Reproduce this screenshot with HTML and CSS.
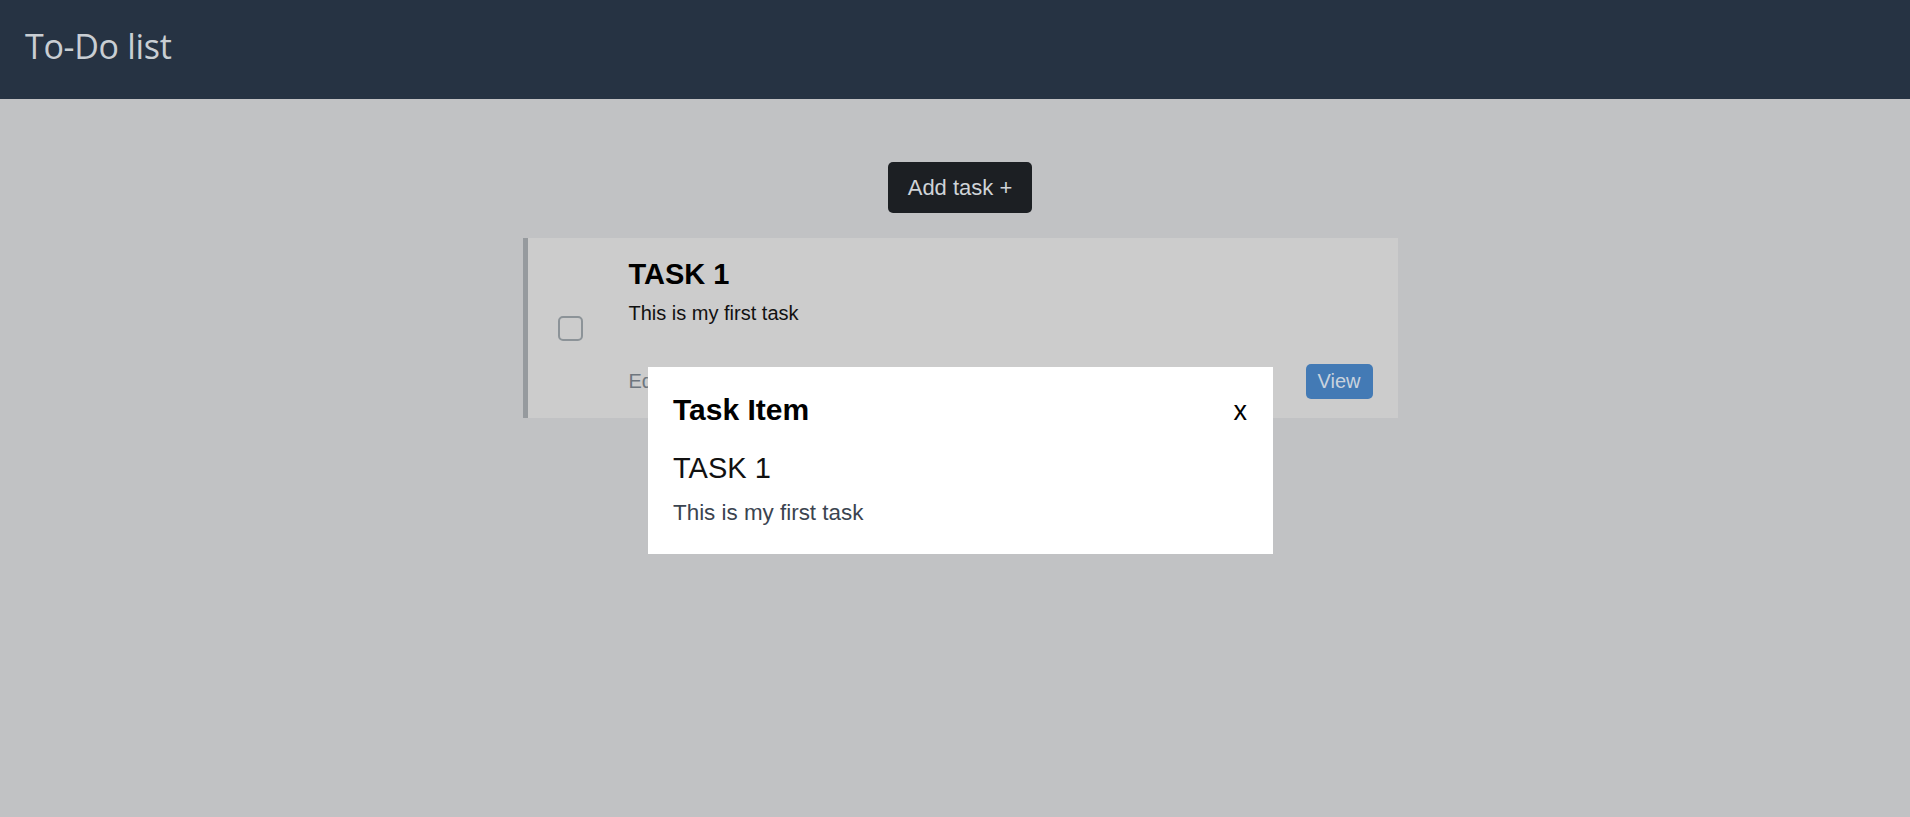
FILE: index.html
```html
<!DOCTYPE html>
<html lang="en">
<head>
<meta charset="utf-8">
<title>To-Do list</title>
<link rel="stylesheet" href="styles.css">
</head>
<body>
<header class="topbar">
  <h1 class="brand">To-Do list</h1>
</header>
<main class="main">
  <button class="add-btn" type="button">Add task +</button>
  <section class="card">
    <div class="check-col">
      <span class="checkbox"></span>
    </div>
    <div class="card-body">
      <h2 class="card-title">TASK 1</h2>
      <p class="card-desc">This is my first task</p>
      <div class="card-actions">
        <button class="btn-link" type="button">Edit</button>
        <button class="btn-view" type="button">View</button>
      </div>
    </div>
  </section>
</main>
<div class="modal">
  <div class="modal-head">
    <h3 class="modal-title">Task Item</h3>
    <span class="modal-close">x</span>
  </div>
  <div class="modal-task">TASK 1</div>
  <div class="modal-desc">This is my first task</div>
</div>
</body>
</html>
```

FILE: styles.css
```css
* { box-sizing: border-box; }
html, body { margin: 0; padding: 0; }
body {
  background: #c1c2c4;
  font-family: "Liberation Sans", Arial, sans-serif;
  min-height: 817px;
}
.topbar {
  height: 99px;
  background: #263343;
  padding: 29px 25px 0;
}
.brand {
  margin: 0;
  font-family: "Open Sans", "Noto Sans", sans-serif;
  font-weight: 400;
  font-size: 34px;
  line-height: 1;
  color: #c9ced3;
  letter-spacing: -0.3px;
}
.main {
  display: flex;
  flex-direction: column;
  align-items: center;
  padding: 63px 0 0 10px;
  gap: 25px;
}
.add-btn {
  width: 144px;
  height: 51px;
  border: 0;
  border-radius: 5px;
  background: #1c1f23;
  color: #cfd3d7;
  font-family: "Liberation Sans", Arial, sans-serif;
  font-size: 22px;
  padding: 0;
}
.card {
  width: 875px;
  height: 180px;
  background: #cccccc;
  border-left: 5px solid #969a9e;
  display: flex;
  align-items: center;
}
.check-col {
  width: 86px;
  display: flex;
  justify-content: center;
  align-items: center;
}
.checkbox {
  width: 25px;
  height: 25px;
  border: 2px solid #8c9398;
  border-radius: 5px;
}
.card-body {
  flex: 1;
  align-self: stretch;
  padding: 19px 25px 19px 15px;
  display: flex;
  flex-direction: column;
}
.card-title {
  margin: 0;
  font-size: 29px;
  font-weight: 700;
  line-height: 1.2;
  color: #000;
}
.card-desc {
  margin: 6px 0 0;
  font-size: 20px;
  line-height: 1.5;
  color: #111;
}
.card-actions {
  margin-top: auto;
  display: flex;
  justify-content: space-between;
  align-items: center;
}
.btn-link,
.btn-view {
  font-family: "Liberation Sans", Arial, sans-serif;
  font-size: 20px;
  line-height: 29px;
  height: 35px;
  border: 0;
  border-radius: 5px;
  padding: 3px 12px;
}
.btn-link {
  background: transparent;
  color: #6e767e;
  padding-left: 0;
}
.btn-view {
  background: #437ab5;
  color: #c9d3de;
}
.modal {
  position: absolute;
  left: 648px;
  top: 367px;
  width: 625px;
  height: 187px;
  background: #fff;
  padding: 26px 26px 24px 25px;
}
.modal-head {
  display: flex;
  justify-content: space-between;
  align-items: center;
}
.modal-title {
  margin: 0;
  font-size: 30px;
  font-weight: 700;
  line-height: 1.15;
  color: #000;
}
.modal-close {
  font-size: 27px;
  line-height: 1;
  color: #000;
  padding-top: 3px;
}
.modal-task {
  margin-top: 23px;
  font-size: 29px;
  line-height: 1.2;
  color: #111;
}
.modal-desc {
  margin-top: 11px;
  font-size: 22.4px;
  line-height: 1.5;
  color: #3b4450;
}
```
